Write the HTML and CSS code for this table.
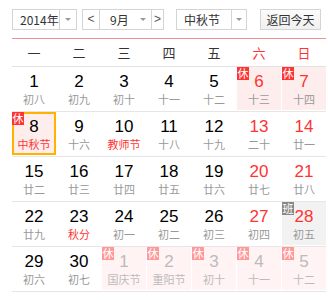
FILE: index.html
```html
<!DOCTYPE html>
<html lang="zh">
<head>
<meta charset="utf-8">
<link rel="stylesheet" href="styles.css">
</head>
<body>
<div class="cal">
  <div class="bar">
    <div class="sel year"><span class="val">2014年</span><span class="drop"><i class="tri"></i></span></div>
    <div class="sel month"><span class="nav">&lt;</span><span class="val">9月</span><span class="dd"><i class="tri"></i></span><span class="nav r">&gt;</span></div>
    <div class="sel fest"><span class="val">中秋节</span><span class="drop"><i class="tri"></i></span></div>
    <button class="today">返回今天</button>
  </div>
  <div class="weekhead">
    <span>一</span><span>二</span><span>三</span><span>四</span><span>五</span><span class="we">六</span><span class="we">日</span>
  </div>
  <div class="week">
    <div class="day"><b>1</b><i>初八</i></div>
    <div class="day"><b>2</b><i>初九</i></div>
    <div class="day"><b>3</b><i>初十</i></div>
    <div class="day"><b>4</b><i>十一</i></div>
    <div class="day"><b>5</b><i>十二</i></div>
    <div class="day rest we"><em class="badge">休</em><b>6</b><i>十三</i></div>
    <div class="day rest we"><em class="badge">休</em><b>7</b><i>十四</i></div>
  </div>
  <div class="week">
    <div class="day rest cur"><em class="badge">休</em><b>8</b><i class="fe">中秋节</i></div>
    <div class="day"><b>9</b><i>十六</i></div>
    <div class="day"><b>10</b><i class="fe">教师节</i></div>
    <div class="day"><b>11</b><i>十八</i></div>
    <div class="day"><b>12</b><i>十九</i></div>
    <div class="day we"><b>13</b><i>二十</i></div>
    <div class="day we"><b>14</b><i>廿一</i></div>
  </div>
  <div class="week">
    <div class="day"><b>15</b><i>廿二</i></div>
    <div class="day"><b>16</b><i>廿三</i></div>
    <div class="day"><b>17</b><i>廿四</i></div>
    <div class="day"><b>18</b><i>廿五</i></div>
    <div class="day"><b>19</b><i>廿六</i></div>
    <div class="day we"><b>20</b><i>廿七</i></div>
    <div class="day we"><b>21</b><i>廿八</i></div>
  </div>
  <div class="week">
    <div class="day"><b>22</b><i>廿九</i></div>
    <div class="day"><b>23</b><i class="fe">秋分</i></div>
    <div class="day"><b>24</b><i>初一</i></div>
    <div class="day"><b>25</b><i>初二</i></div>
    <div class="day"><b>26</b><i>初三</i></div>
    <div class="day we"><b>27</b><i>初四</i></div>
    <div class="day work we"><em class="badge">班</em><b>28</b><i>初五</i></div>
  </div>
  <div class="week">
    <div class="day"><b>29</b><i>初六</i></div>
    <div class="day"><b>30</b><i>初七</i></div>
    <div class="day rest other"><em class="badge">休</em><b>1</b><i>国庆节</i></div>
    <div class="day rest other"><em class="badge">休</em><b>2</b><i>重阳节</i></div>
    <div class="day rest other"><em class="badge">休</em><b>3</b><i>初十</i></div>
    <div class="day rest other"><em class="badge">休</em><b>4</b><i>十一</i></div>
    <div class="day rest other"><em class="badge">休</em><b>5</b><i>十二</i></div>
  </div>
</div>
</body>
</html>
```
FILE: styles.css
```css
* { box-sizing: border-box; }
html, body { margin: 0; padding: 0; background: #fff; }
body { font-family: "Noto Sans CJK SC", "Liberation Sans", sans-serif; color: #333; }

.cal { width: 314px; margin-left: 12px; }

.bar {
  display: flex;
  align-items: center;
  height: 39px;
  padding-top: 0;
  border-bottom: 1px solid #f0908f;
}
.sel {
  display: flex;
  height: 21px;
  border: 1px solid #d4d4d4;
  font-size: 12px;
  line-height: 19px;
  background: #fff;
}
.sel .val { padding-left: 7px; flex: 1; white-space: nowrap; }
.sel .drop {
  width: 20px;
  border-left: 1px solid #d4d4d4;
  display: flex; align-items: center; justify-content: center;
}
.tri {
  display: block;
  width: 0; height: 0;
  border-left: 3px solid transparent;
  border-right: 3px solid transparent;
  border-top: 3px solid #999;
}
.year { width: 65px; }
.month { width: 82px; margin-left: 5px; }
.month .nav {
  width: 17px; text-align: center; color: #555;
  border-right: 1px solid #d4d4d4;
  font-family: "Liberation Sans", sans-serif;
}
.month .nav.r { width: 12px; border-right: 0; border-left: 1px solid #d4d4d4; text-align: right; padding-right: 2px; }
.month .val { padding-left: 10px; }
.month .dd { width: 16px; display: flex; align-items: center; justify-content: center; }
.fest { width: 71px; margin-left: 12px; }
.fest .drop { width: 15px; }
.today {
  margin-left: 13px;
  width: 61px;
  height: 21px;
  padding: 0;
  border: 1px solid #d4d4d4;
  background: linear-gradient(#fbfbfb, #f0f0f0);
  font-family: "Noto Sans CJK SC", sans-serif;
  font-size: 12px;
  color: #333;
  line-height: 19px;
}

.weekhead {
  display: grid;
  grid-template-columns: repeat(7, 44px);
  column-gap: 1px;
  height: 28px;
  border-bottom: 1px solid #e2e2e2;
  font-size: 13px;
  line-height: 27px;
  text-align: center;
  color: #333;
}
.weekhead .we { color: #f33; }

.week {
  display: grid;
  grid-template-columns: repeat(7, 44px);
  column-gap: 1px;
  padding-bottom: 1px;
  border-bottom: 1px solid #e6e6e6;
}
.day {
  position: relative;
  height: 43px;
  text-align: center;
}
.day b {
  display: block;
  font-family: "Liberation Sans", Arial, sans-serif;
  font-weight: normal;
  font-size: 17px;
  line-height: 18px;
  padding-top: 6px;
  color: #000;
}
.day i {
  display: block;
  font-style: normal;
  font-size: 11px;
  line-height: 14px;
  padding-top: 1px;
  color: #999;
}
.day i.fe { color: #f33; }
.day.we b { color: #f33; }
.day.rest { background: #fdeded; }
.day.work { background: #f2f2f2; }
.day.cur { border: 2px solid #ffb300; }
.day.cur b { padding-top: 4px; }
.badge {
  position: absolute;
  left: 0; top: 0;
  width: 12px; height: 13px;
  background: #f33;
  color: #fff;
  font-style: normal;
  font-size: 11px;
  line-height: 13px;
  text-align: center;
}
.day.cur .badge { left: -2px; top: -2px; }
.day.work .badge { background: #888; }
.day.other { background: #fff3f3; }
.day.other b, .day.other i { color: #bbb; }
.day.other .badge { background: #f99; }
```
